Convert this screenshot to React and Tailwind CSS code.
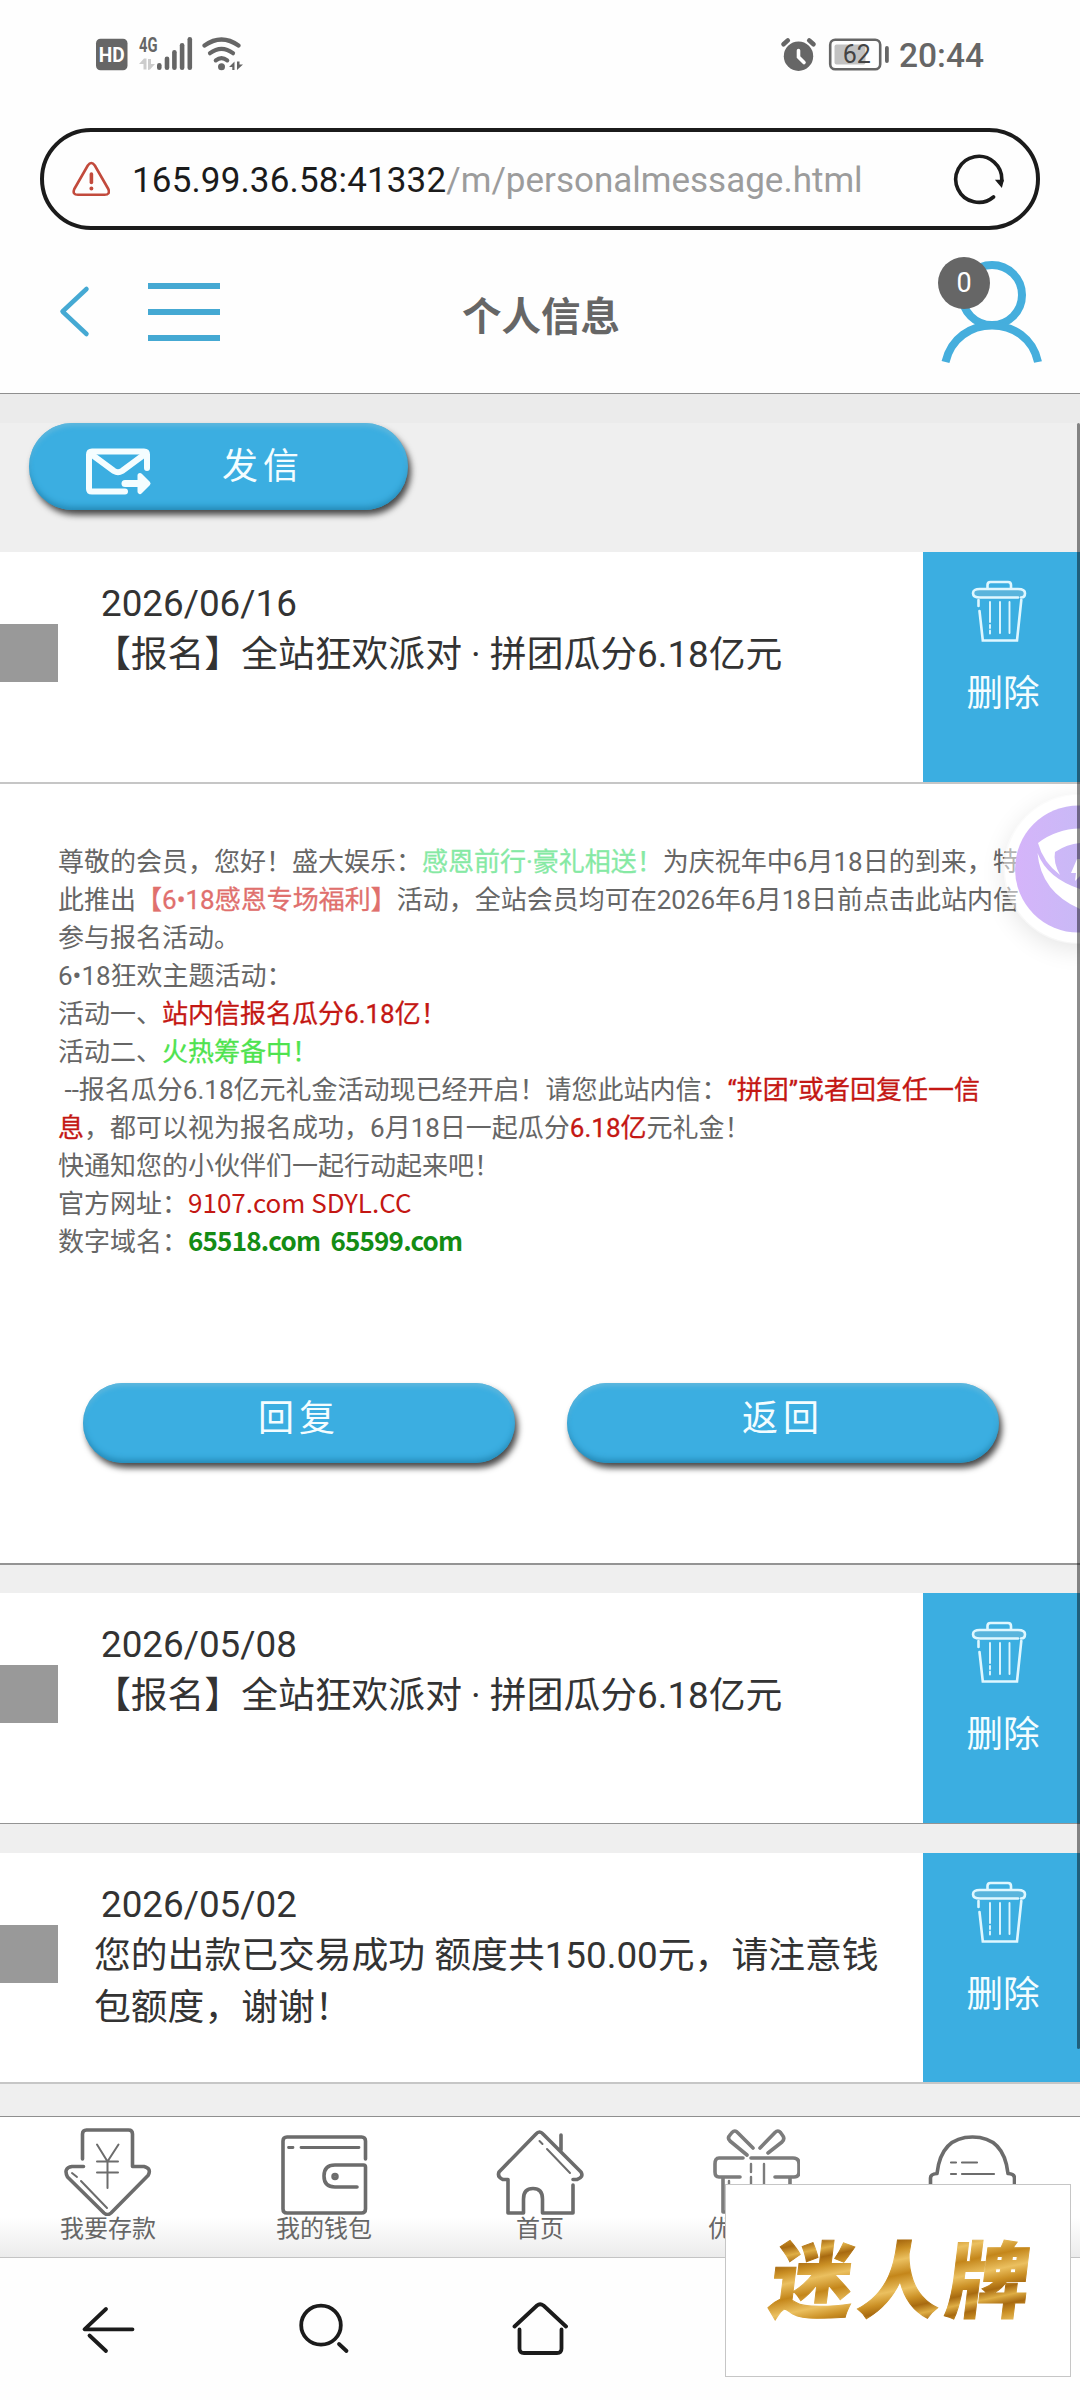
import React from 'react';

const BLUE = '#45a9d3';

function StatusBar() {
  return (
    <div className="flex h-[108px] items-start justify-between pl-[95px] pr-[95px] pt-[34px] text-[#666]">
      <svg width="150" height="40" viewBox="95 34 150 40" fill="#666">
        <rect x="96" y="38.7" width="31.5" height="31.5" rx="4.5" />
        <text x="111.8" y="61.6" textAnchor="middle" fontFamily="Roboto, sans-serif" fontWeight="700" fontSize="20.5" textLength="26" lengthAdjust="spacingAndGlyphs" fill="#fff">HD</text>
        <text x="139" y="52" fontFamily="Roboto, sans-serif" fontWeight="700" fontSize="20" textLength="18.5" lengthAdjust="spacingAndGlyphs">4G</text>
        <g fill="#ccc">
          <path d="M139 64l5-5.5h2.5v11h-3v-5.500z" />
          <path d="M148 59v11l2-.5 5-5.500h-4v-5z" />
        </g>
        <rect x="157" y="63" width="4.600" height="7" rx="2.300" />
        <rect x="164.700" y="56.500" width="4.600" height="13.500" rx="2.300" />
        <rect x="172.100" y="50" width="4.600" height="20" rx="2.300" />
        <rect x="179.800" y="43" width="4.600" height="27" rx="2.300" />
        <rect x="187.500" y="37" width="4.600" height="33" rx="2.300" />
        <g fill="none" stroke="#666" strokeWidth="4.200" strokeLinecap="round">
          <path d="M204.500 45.500Q221.500 33.500 238.500 45.500" />
          <path d="M210 53.200Q221.500 44.500 233 53.200" />
          <path d="M215.800 60.400Q221.500 56 227.200 60.400" />
        </g>
        <circle cx="221.500" cy="66.800" r="3.500" />
        <path d="M229 67l5.500-5.500v8.500h-2.200v-3z" />
        <path d="M237 61.500v8.500l6-5.500h-3.500v-3z" />
      </svg>
      <svg width="205" height="40" viewBox="780 34 205 40" fill="#666">
        <circle cx="798.500" cy="56.200" r="14.700" />
        <g fill="none" strokeLinecap="round">
          <path d="M783.500 44.200l4.300-3.800M813.500 44.200l-4.300-3.800" stroke="#666" strokeWidth="4.600" />
          <path d="M798.500 50.500v6.500l5.500 5.500" stroke="#fff" strokeWidth="3.600" />
        </g>
        <rect x="830.200" y="39.700" width="50" height="29.500" rx="5" fill="none" stroke="#666" strokeWidth="2.600" />
        <rect x="834.500" y="44.500" width="31" height="20" rx="2" fill="#c2c2c2" />
        <text x="856.800" y="63.400" textAnchor="middle" fontFamily="Roboto, sans-serif" fontSize="25" fill="#444">62</text>
        <rect x="885" y="46" width="3.800" height="17" rx="1.900" />
        <text x="899" y="66.700" fontFamily="Roboto, sans-serif" fontWeight="500" fontSize="33.500" textLength="85" lengthAdjust="spacingAndGlyphs">20:44</text>
      </svg>
    </div>
  );
}

function AddressBar() {
  return (
    <div className="mx-10 mt-5 flex h-[102px] items-center rounded-full border-4 border-[#1b1b1b]">
      <svg className="ml-[28px] shrink-0" width="38" height="36" viewBox="72 160 38 36" fill="none" stroke="#c24a3c" strokeWidth="2.600" strokeLinejoin="round">
        <path d="M87.800 164.500Q91.300 159.500 94.800 164.500L108.300 188Q110.500 193.800 104.500 193.800H78Q72 193.800 74.300 188Z" />
        <path d="M91.400 173v8.500" strokeWidth="3.600" strokeLinecap="round" />
        <circle cx="91.400" cy="187.500" r="1" strokeWidth="2" />
      </svg>
      <div className="ml-[22px] mt-[3px] flex-1 whitespace-nowrap text-[35px] leading-[44px] tracking-[0.150px] text-[#1b1b1b]">
        165.99.36.58:41332<span className="tracking-normal text-[#9c9c9c]">/m/personalmessage.html</span>
      </div>
      <svg className="mr-[32px] shrink-0" width="52" height="54" viewBox="952 151 52 54" fill="none" stroke="#1b1b1b" strokeWidth="3.600" strokeLinecap="round">
        <path d="M993.500 196A23 23 0 1 1 1001.700 180" />
        <path d="M996.500 179.500h6.500l-1.500 6z" strokeWidth="1.500" fill="#1b1b1b" />
      </svg>
    </div>
  );
}

function PageHeader() {
  return (
    <header className="flex h-[164px] items-start justify-between border-b border-[#8f8f8f] px-[38px]">
      <div className="flex w-[300px] items-center pt-[50px]">
        <svg className="ml-[20px]" width="32" height="62" viewBox="58 280 32 62" fill="none" stroke={BLUE} strokeWidth="4.500" strokeLinecap="round" strokeLinejoin="round">
          <path d="M86.500 289L62.500 311.500L86.500 334" />
        </svg>
        <div className="ml-[58px] mt-[2px] flex w-[72px] flex-col gap-5">
          <i className="h-[6px] bg-[#45a9d3]" />
          <i className="h-[6px] bg-[#45a9d3]" />
          <i className="h-[6px] bg-[#45a9d3]" />
        </div>
      </div>
      <h1 className="ml-[2px] mt-[63px] text-[39.500px] font-bold leading-[50px] text-[#666]">个人信息</h1>
      <div className="flex w-[300px] justify-end">
        <div className="relative mt-[27px] h-[107px] w-[104px]">
          <svg width="104" height="107" viewBox="938 257 104 107" fill="none" stroke="#45aedd" strokeWidth="8">
            <ellipse cx="992" cy="295" rx="30" ry="30" />
            <path d="M945.500 362C951 338 971 325.500 992 325.500S1033 338 1038 362" />
          </svg>
          <span className="absolute left-0 top-0 flex h-[52px] w-[52px] items-center justify-center rounded-full bg-[#666] text-[27px] leading-none text-white">0</span>
        </div>
      </div>
    </header>
  );
}

const pill = "rounded-full bg-[#3baee1] text-[36px] tracking-[5px] text-[#f4fdff] shadow-[3px_5px_6px_#4a4a4a,inset_0_-5px_6px_-2px_#2388b5,inset_0_4px_5px_-1px_#62b8dd]";

function Trash() {
  return (
    <svg width="56" height="64" viewBox="971 580 56 64" fill="none" stroke="#dff7ff" strokeWidth="2.600" strokeLinecap="round">
      <path d="M987.500 589v-4q0-3 3-3h17.500q3 0 3 3v4" />
      <path d="M1018 597.500H980q-7 0-7-4.300t7-4.200h38q7 0 7 4.200t-4 4.300" fill="#59b4dc" />
      <path d="M978.500 600v6M979.500 611l3.300 29.500H1017l4.300-40.500" />
      <path d="M990 602v20M990 625v3M990 630.500v3M1000 602v31M1009.500 602v31" strokeWidth="1.900" />
    </svg>
  );
}

function MessageRow({ date, lines, className }) {
  return (
    <section className={"flex bg-white " + className}>
      <i className="mt-[72px] h-[58px] w-[58px] shrink-0 bg-[#999]" />
      <div className="flex-1 whitespace-nowrap pt-[26px] text-[36.800px] leading-[52.500px] text-[#333]">
        <div className="pl-[43px]">{date}</div>
        <div className="-mt-[2px] pl-[36px]">
          {lines.map((l) => <div key={l}>{l}</div>)}
        </div>
      </div>
      <button className="flex w-[157px] shrink-0 flex-col items-center bg-[#3baee1] pt-[28px]">
        <span className="-ml-[5px]"><Trash /></span>
        <span className="ml-[3px] mt-[24px] text-[36.600px] leading-[52px] text-[#f4fdff]">删除</span>
      </button>
    </section>
  );
}

const R = ({ children }) => <span className="text-[#c41713] [-webkit-text-stroke:0.300px_#c41713]">{children}</span>;

function MessageDetail() {
  return (
    <article className="flex h-[781px] flex-col border-b-2 border-[#949494] bg-white pt-[59px]">
      <div className="h-[418px] whitespace-nowrap pl-[58px] text-[26px] leading-[38px] text-[#666]">
        <p>尊敬的会员，您好！盛大娱乐：<span className="text-[#86e9a4] [-webkit-text-stroke:0.300px_#86e9a4]">感恩前行·豪礼相送！</span>为庆祝年中6月18日的到来，特</p>
        <p>此推出<span className="text-[#e0706d] [-webkit-text-stroke:0.300px_#e0706d]">【6•18感恩专场福利】</span>活动，全站会员均可在2026年6月18日前点击此站内信</p>
        <p>参与报名活动。</p>
        <p>6•18狂欢主题活动：</p>
        <p>活动一、<R>站内信报名瓜分6.18亿！</R></p>
        <p>活动二、<span className="text-[#4fe34f] [-webkit-text-stroke:0.300px_#4fe34f]">火热筹备中！</span></p>
        <p className="whitespace-pre"> --报名瓜分6.18亿元礼金活动现已经开启！请您此站内信：<R>“拼团”或者回复任一信</R></p>
        <p><R>息</R>，都可以视为报名成功，6月18日一起瓜分<R>6.18亿</R>元礼金！</p>
        <p>快通知您的小伙伴们一起行动起来吧！</p>
        <p>官方网址：<span className="font-['Noto_Sans_CJK_SC',sans-serif] leading-none text-[#c41713]">9107.com SDYL.CC</span></p>
        <p className="whitespace-pre">数字域名：<span className="font-['Noto_Sans_CJK_SC',sans-serif] font-bold leading-none tracking-[-0.800px] text-[#148c14]">65518.com  65599.com</span></p>
      </div>
      <div className="mt-[122px] flex gap-[52px] pl-[83px]">
        <button className={"h-[80px] w-[432px] pb-[8px] " + pill}>回复</button>
        <button className={"h-[80px] w-[432px] pb-[8px] " + pill}>返回</button>
      </div>
    </article>
  );
}

const tabs = [
  {
    label: '我要存款',
    icon: (
      <>
        <path d="M18.500 32V7q0-4 4-4h42q4 0 4 4v32.500H80q8 2 4 9L47 86q-3.500 3-7 0L3.500 50Q-1 41 8 39.500h11.500" />
        <g strokeWidth="2">
          <path d="M33 17.500l10.500 17L54.500 17.500M43.500 34v27M33 34.500h21M33 45.500h21" />
          <path d="M8 46l5 4M17 54l26 27" />
        </g>
      </>
    ),
  },
  {
    label: '我的钱包',
    icon: (
      <g transform="translate(1 0)">
        <path d="M84.500 32V14q0-4-4-4H6q-4 0-4 4v68q0 4 4 4h74.500q4 0 4-4V40q0-2-2-2H54q-11 0-11 11t11 11h22" />
        <path d="M7.500 20.500H12M20 20.500h58" strokeWidth="2.800" />
        <circle cx="54" cy="49.500" r="2" strokeWidth="3.500" />
      </g>
    ),
  },
  {
    label: '首页',
    icon: (
      <g transform="translate(1 0)">
        <path d="M76 58v28H45.500V72q0-10.500-9.500-10.500T26.500 72v14H11V52.500H6q-6-2.500-4-7.500L39 7q3.500-4 7 0l38 38q3 5-4 7.500h-4M64 8v15" />
        <path d="M42.500 14l3 3M50 22l23 24" strokeWidth="2" />
      </g>
    ),
  },
  {
    label: '优惠活动',
    icon: (
      <g transform="translate(1 0)" stroke="#7c7c7c">
        <path d="M34 28L17 14q-3-3 0-6l2-2.500q3-3 5.500 0L40 21M47 21L62 5.500q3-3 5.500 0L70 9q2 3-1 6L55 26" />
        <path d="M30 31H6q-4 0-4 6v8q0 5 4 5h21M38 31h42q6 0 6 6v8q0 5-5 5H62M10 50v35M77 50v35H10" />
        <path d="M38 37v8M38 50v8M51 37v24M16 54v4" strokeWidth="2.400" />
      </g>
    ),
  },
  {
    label: '在线客服',
    icon: (
      <g transform="translate(1 0)">
        <path d="M1.500 62V51q0-4 6.500-4.500Q12 10 43.500 10T79 46.500q6.500.5 6.500 4.500v11" />
        <path d="M22 35.500h5M33 35.500h15M22 47h5M33 47h32M22 58.500h5M33 58.500h25" strokeWidth="2.200" />
      </g>
    ),
  },
];

function TabBar() {
  return (
    <nav className="grid h-[142px] grid-cols-5 border-b border-t border-b-[#c4c4c4] border-t-[#8f8f8f] bg-[linear-gradient(#fff_72%,#ebebeb)]">
      {tabs.map((t) => (
        <div key={t.label} className="flex flex-col items-center pt-[10px]">
          <svg width="88" height="89" viewBox="0 0 88 89" fill="none" stroke="#6c6c6c" strokeWidth="3.600" strokeLinecap="round" strokeLinejoin="round">{t.icon}</svg>
          <span className="-mt-[2px] text-[24px] leading-[30px] text-[#666]">{t.label}</span>
        </div>
      ))}
    </nav>
  );
}

function BrowserBar() {
  return (
    <nav className="grid h-[142px] grid-cols-5 justify-items-center bg-[#fefefe] pt-[41px]">
      <svg width="56" height="60" viewBox="80 2299 56 60" fill="none" stroke="#1b1b1b" strokeWidth="3.800" strokeLinecap="round" strokeLinejoin="round">
        <path d="M106 2309L84.500 2329.300H132.500M89.500 2335.500L106 2351" />
      </svg>
      <svg width="56" height="60" viewBox="295.500 2299 56 60" fill="none" stroke="#1b1b1b" strokeWidth="3.800" strokeLinecap="round">
        <ellipse cx="320.500" cy="2325.200" rx="19.800" ry="19.500" />
        <path d="M338.500 2344l7.500 7" />
      </svg>
      <svg width="56" height="60" viewBox="512 2299 56 60" fill="none" stroke="#1b1b1b" strokeWidth="3.800" strokeLinecap="round" strokeLinejoin="round">
        <path d="M514.500 2326.500L537 2305.500Q540 2303 543.500 2305.500L566 2326.500M519.500 2329.500V2348.500Q519.500 2353 524 2353H557Q561.500 2353 561.500 2348.500V2329.500" />
      </svg>
    </nav>
  );
}

function FloatingAd() {
  return (
    <aside className="absolute left-[725px] top-[2184px] flex h-[193px] w-[346px] items-center justify-center border border-[#c6c6c6] bg-white">
      <svg width="290" height="110" viewBox="0 0 290 110">
        <defs>
          <linearGradient id="gold" x1="0" y1="0" x2="0.140" y2="0.300" spreadMethod="reflect">
            <stop offset="0" stopColor="#c4861a" />
            <stop offset="0.350" stopColor="#ebc060" />
            <stop offset="0.600" stopColor="#cb9025" />
            <stop offset="0.800" stopColor="#a86a10" />
            <stop offset="1" stopColor="#dfae45" />
          </linearGradient>
        </defs>
        <text transform="skewX(-7)" x="25" y="85" fontFamily="'Noto Sans CJK SC', sans-serif" fontWeight="900" fontSize="83" textLength="259" fill="url(#gold)" stroke="url(#gold)" strokeWidth="1">迷人牌</text>
      </svg>
    </aside>
  );
}

function FloatingShield() {
  return (
    <div className="absolute right-0 top-[780px] h-[190px] w-[105px] overflow-hidden">
      <div className="absolute left-[30px] top-[15px] h-[148px] w-[148px] rounded-full shadow-[0_6px_26px_rgba(0,0,0,0.110)]" />
      <svg className="absolute left-0 top-0" width="105" height="190" viewBox="975 780 105 190">
        <defs>
          <linearGradient id="violet" x1="0" y1="0" x2="1" y2="0">
            <stop offset="0" stopColor="#d5b4fa" />
            <stop offset="0.500" stopColor="#c9b9f6" />
          </linearGradient>
        </defs>
        <circle cx="1078.500" cy="869" r="69" fill="none" stroke="#fff" strokeOpacity="0.500" strokeWidth="12" />
        <circle cx="1078.500" cy="869" r="63.500" fill="url(#violet)" />
        <path d="M1038 843Q1056 829 1080 828.500V843Q1067 844 1055 852Q1053 862 1060 875Q1043 862 1038 843Z" fill="#fff" />
        <path d="M1037.500 853Q1047 878 1080 889V909Q1041 892 1037.500 853Z" fill="#fff" />
        <path d="M1077 859l-6 14h5l-1 8 5-5v-17z" fill="#fff" />
      </svg>
    </div>
  );
}

export default function App() {
  return (
    <div className="relative flex h-[2400px] w-[1080px] flex-col overflow-hidden bg-[#fefefe] font-[Roboto,'Noto_Sans_CJK_SC',sans-serif]">
      <StatusBar />
      <AddressBar />
      <PageHeader />
      <main className="flex flex-col bg-[#efefef]">
        <div className="h-[29px] bg-[#ebebeb]" />
        <div className="h-[129px] pl-[29px]">
          <button className={"flex h-[87px] w-[379px] items-center " + pill}>
            <svg className="ml-[55px] mt-[11px]" width="70" height="52" viewBox="84 446 70 52" fill="none" stroke="#f4fdff" strokeWidth="6" strokeLinecap="round" strokeLinejoin="round">
              <path d="M147 468V454.500Q147 451.500 144 451.500H92Q89 451.500 89 454.500V489Q89 491.500 92 491.500H125" />
              <path d="M91 454L114 471Q118 473.500 122 471L145 454" />
              <path d="M125 483.500H140" strokeWidth="7" />
              <path d="M140 475.500L148 483.500L140 491.500Z" fill="#f4fdff" strokeWidth="5" />
            </svg>
            <span className="ml-[68px] leading-[50px]">发信</span>
          </button>
        </div>
        <MessageRow className="h-[232px] border-b-2 border-[#c6c6c6]" date="2026/06/16" lines={['【报名】全站狂欢派对 · 拼团瓜分6.18亿元']} />
        <MessageDetail />
        <MessageRow className="mt-[28px] h-[231px] border-b border-[#949494]" date="2026/05/08" lines={['【报名】全站狂欢派对 · 拼团瓜分6.18亿元']} />
        <MessageRow className="mt-[29px] h-[231px] border-b-2 border-[#c6c6c6]" date="2026/05/02" lines={['您的出款已交易成功 额度共150.00元，请注意钱', '包额度，谢谢！']} />
        <div className="h-[32px]" />
      </main>
      <TabBar />
      <BrowserBar />
      <FloatingShield />
      <div className="absolute right-0 top-[423px] h-[1626px] w-[3px] rounded-full bg-black/45" />
      <FloatingAd />
    </div>
  );
}
